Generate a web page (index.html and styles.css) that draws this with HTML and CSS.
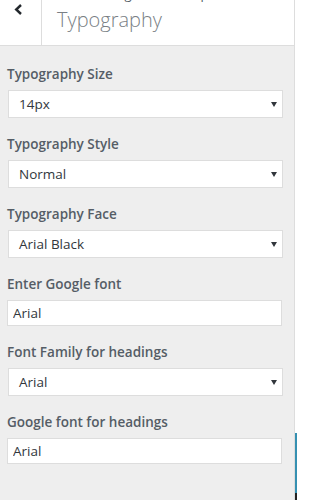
FILE: index.html
```html
<!DOCTYPE html>
<html>
<head>
<meta charset="utf-8">
<link rel="stylesheet" href="styles.css">
</head>
<body>
<div class="page">
  <div class="panel">
    <div class="header">
      <div class="back">
        <svg width="9" height="11" viewBox="0 0 9 11"><polyline points="7,1 2.2,5.5 7,10" fill="none" stroke="#23282d" stroke-width="2.4"/></svg>
      </div>
      <div class="titles">
        <div class="crumb">Customizing ▸ Theme Options</div>
        <h3 class="title">Typography</h3>
      </div>
    </div>
    <div class="controls">
      <div class="control">
        <label class="label">Typography Size</label>
        <div class="select"><span>14px</span><i class="caret"></i></div>
      </div>
      <div class="control">
        <label class="label">Typography Style</label>
        <div class="select"><span>Normal</span><i class="caret"></i></div>
      </div>
      <div class="control">
        <label class="label">Typography Face</label>
        <div class="select"><span>Arial Black</span><i class="caret"></i></div>
      </div>
      <div class="control">
        <label class="label">Enter Google font</label>
        <input class="text" type="text" value="Arial">
      </div>
      <div class="control">
        <label class="label">Font Family for headings</label>
        <div class="select"><span>Arial</span><i class="caret"></i></div>
      </div>
      <div class="control">
        <label class="label">Google font for headings</label>
        <input class="text" type="text" value="Arial">
      </div>
    </div>
  </div>
  <div class="side">
    <div class="frame-edge"></div>
    <div class="frame-dark"></div>
  </div>
</div>
</body>
</html>
```
FILE: styles.css
```css
html, body {
  margin: 0;
  padding: 0;
  background: #fff;
}
body {
  font-family: "Open Sans", "Noto Sans", sans-serif;
  overflow: hidden;
}
.page {
  display: flex;
  height: 500px;
}
.panel {
  width: 294px;
  height: 500px;
  background: #eee;
  border-right: 1px solid #ddd;
  flex: none;
  overflow: hidden;
}
.header {
  display: flex;
  height: 45px;
  background: #fff;
  border-bottom: 1px solid #ddd;
  overflow: hidden;
}
.back {
  width: 42px;
  border-right: 1px solid #ddd;
  padding: 4px 0 0 14px;
  box-sizing: border-box;
  flex: none;
}
.back svg {
  display: block;
}
.titles {
  padding-left: 15px;
  margin-top: -14px;
}
.crumb {
  font-size: 13px;
  line-height: 16px;
  color: #555d66;
  white-space: nowrap;
}
.title {
  margin: 6px 0 0;
  font-size: 20px;
  line-height: 24px;
  font-weight: 300;
  color: #7a7f85;
  white-space: nowrap;
}
.controls {
  padding: 18px 12px 0 7px;
}
.control {
  margin-bottom: 16px;
}
.label {
  display: block;
  font-size: 13.5px;
  line-height: 20px;
  font-weight: 600;
  color: #555d66;
  margin-bottom: 6px;
  white-space: nowrap;
}
.select {
  margin-left: 1px;
  width: 275px;
  height: 28px;
  box-sizing: border-box;
  background: #fff;
  border: 1px solid #ddd;
  display: flex;
  align-items: center;
  justify-content: space-between;
  padding: 0 5px 0 10px;
  font-size: 13.5px;
  line-height: 26px;
  color: #32373c;
}
.caret {
  width: 0;
  height: 0;
  border-left: 3px solid transparent;
  border-right: 3px solid transparent;
  border-top: 5px solid #32373c;
  margin-top: 1px;
}
.text {
  display: block;
  width: 275px;
  height: 26px;
  box-sizing: border-box;
  margin: 0;
  background: #fff;
  border: 1px solid #ddd;
  padding: 0 5px;
  font-family: "Open Sans", "Noto Sans", sans-serif;
  font-size: 13.5px;
  line-height: 24px;
  color: #32373c;
  outline: none;
}
.side {
  flex: 1;
  display: flex;
  flex-direction: column;
  background: #fff;
}
.frame-edge {
  margin-top: 433px;
  width: 2px;
  height: 60px;
  background: #3590b1;
}
.frame-dark {
  width: 2px;
  flex: 1;
  background: #222;
}
```
